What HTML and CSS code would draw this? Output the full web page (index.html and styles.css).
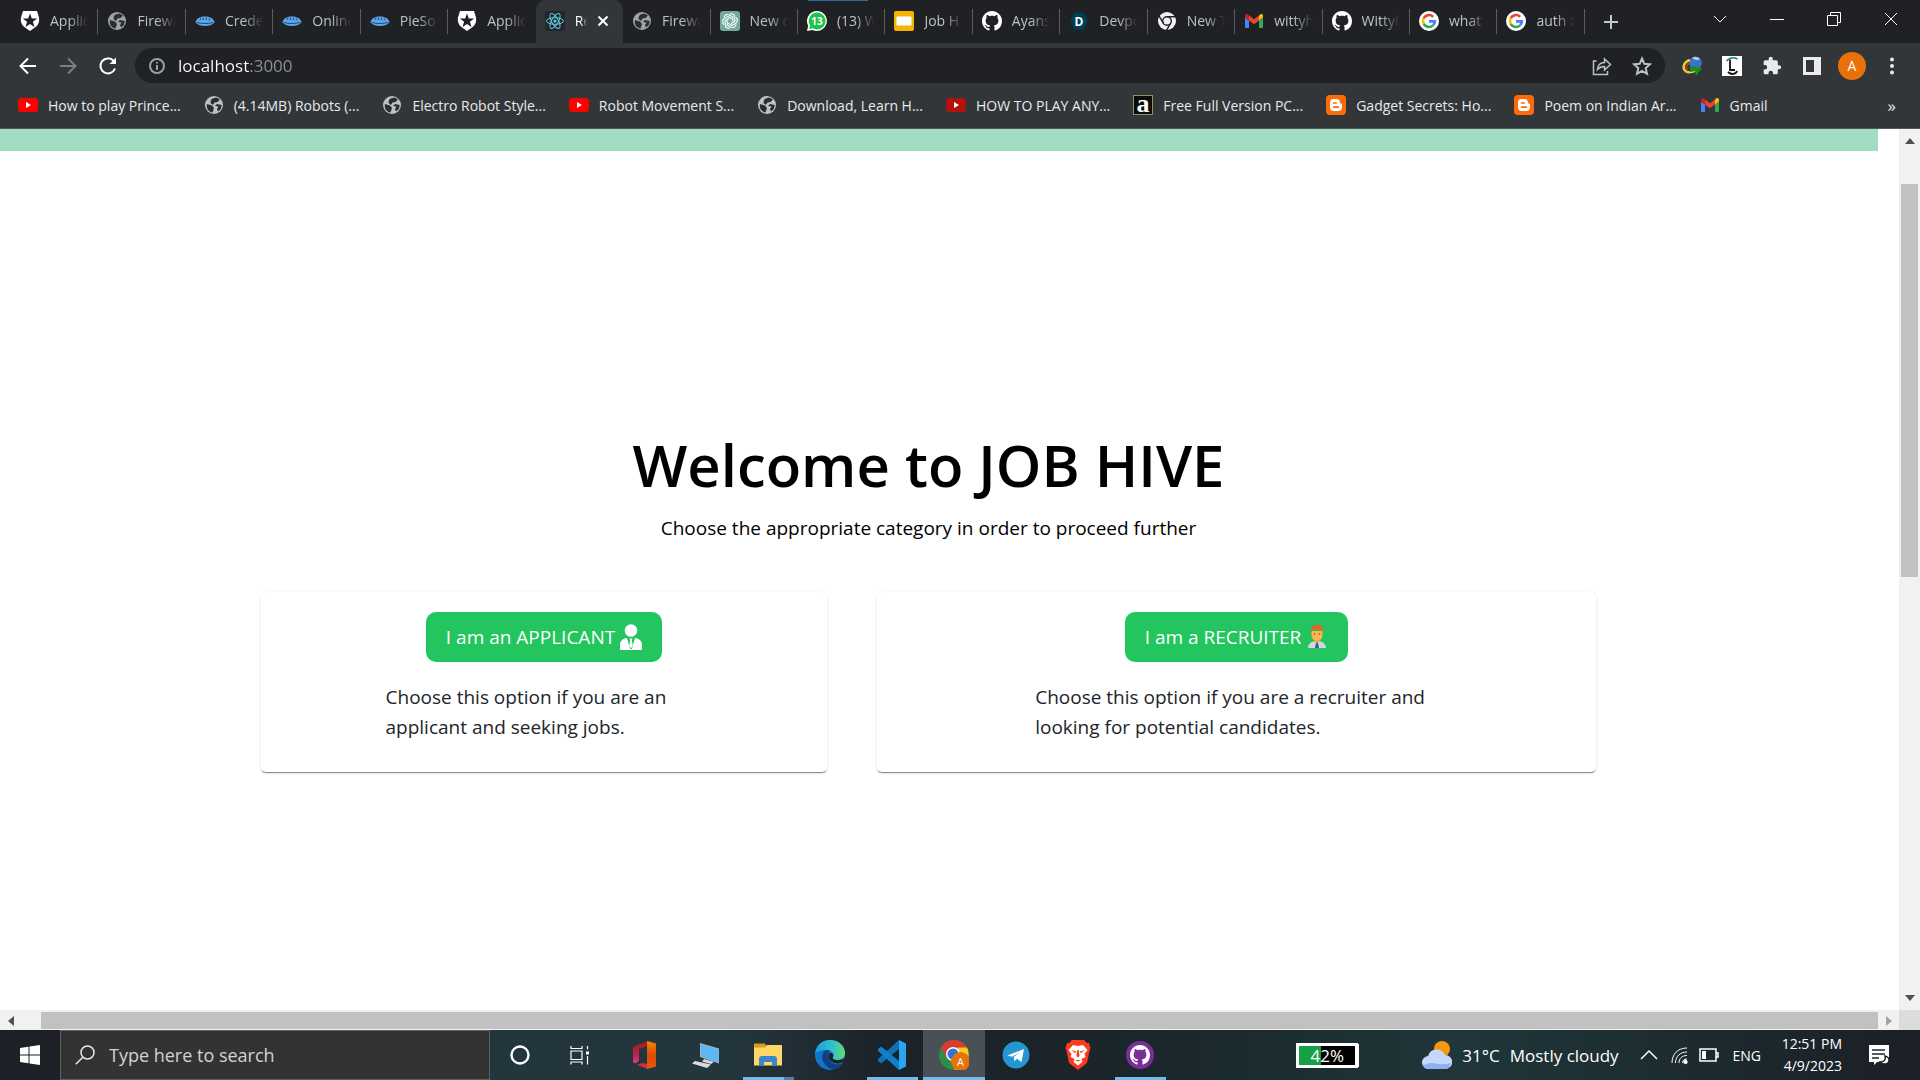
FILE: index.html
```html
<!DOCTYPE html>
<html lang="en">
<head>
    <meta charset="UTF-8">
    <meta name="viewport" content="width=device-width, initial-scale=1">
    <title>Job Hive</title>
    <link rel="stylesheet" href="styles.css">
</head>
<body>
    <!-- Shared icons -->
    <svg class="sprite" aria-hidden="true">
        <symbol id="auth0" viewBox="0 0 20 20">
            <path fill="#fff" d="M3 0h14l2 6.500c.8 4-.6 7-3 9.200L10 20l-6-4.300C1.600 13.500.2 10.500 1 6.500z"/>
            <path fill="#202124" d="M10 2.500l1.800 5h5.400l-4.300 3.300 1.600 5.200L10 12.900 5.500 16l1.600-5.200L2.800 7.500h5.400z"/>
        </symbol>
        <symbol id="globe" viewBox="0 0 20 20">
            <circle cx="10" cy="10" r="9" fill="currentColor"/>
            <path fill="#2b2d30" d="M3 9l5 1.500 2 2.500-1.500 4.500C5 17 2.500 14 2.800 10.500zM8.500 3.500l4-1 3.500 2-2.500 2.500-3 .5L9 10 6.500 8l.5-3zM13 9l4.800 1-1 4-2.800 2.500-1-2.500 1.500-2.500L11 11z"/>
        </symbol>
        <symbol id="pie" viewBox="0 0 20 20">
            <path fill="#5fa4e8" d="M1 10c1-3 4.500-4.500 9-4.500S18 7 19 10c1 1 .4 2.200-.6 2.200C17 14 14 15 10 15s-7-1-8.400-2.800C.6 12.200 0 11 1 10z"/>
            <path fill="none" stroke="#174a80" d="M2 11.500c4 1.300 12 1.300 16 0M5 9l1-2M8 9l.6-2.500M11 9l.6-2.500M14 9.500l.6-2"/>
        </symbol>
        <symbol id="react" viewBox="0 0 20 20">
            <rect width="20" height="20" rx="2" fill="#20272b"/>
            <g fill="none" stroke="#61c9e0">
                <ellipse cx="10" cy="10" rx="8.500" ry="3.300"/>
                <ellipse cx="10" cy="10" rx="8.500" ry="3.300" transform="rotate(60 10 10)"/>
                <ellipse cx="10" cy="10" rx="8.500" ry="3.300" transform="rotate(120 10 10)"/>
            </g>
            <circle cx="10" cy="10" r="1.600" fill="#61c9e0"/>
        </symbol>
        <symbol id="gpt" viewBox="0 0 20 20">
            <rect width="20" height="20" rx="3" fill="#74aa9c"/>
            <g fill="none" stroke="#fff" stroke-width="1.100">
                <path id="petal" d="M10 3c2.600-.8 5 1 4.800 3.500v4L11 12.600"/>
                <use href="#petal" transform="rotate(60 10 10)"/>
                <use href="#petal" transform="rotate(120 10 10)"/>
                <use href="#petal" transform="rotate(180 10 10)"/>
                <use href="#petal" transform="rotate(240 10 10)"/>
                <use href="#petal" transform="rotate(300 10 10)"/>
            </g>
        </symbol>
        <symbol id="slides" viewBox="0 0 20 20">
            <rect width="20" height="20" rx="2" fill="#f4b400"/>
            <rect x="2.500" y="5.500" width="15" height="9" fill="#fff"/>
        </symbol>
        <symbol id="github" viewBox="0 0 16 16">
            <path fill="#fff" d="M8 0C3.580 0 0 3.580 0 8c0 3.540 2.290 6.530 5.470 7.590.4.070.55-.17.55-.38 0-.19-.01-.82-.01-1.490-2.010.37-2.530-.49-2.690-.94-.09-.23-.48-.94-.82-1.130-.28-.15-.68-.52-.01-.53.63-.01 1.080.58 1.230.82.72 1.210 1.870.87 2.330.66.07-.52.28-.87.51-1.070-1.780-.2-3.640-.89-3.640-3.950 0-.87.31-1.590.82-2.150-.08-.2-.36-1.020.08-2.120 0 0 .67-.21 2.200.82.64-.18 1.320-.27 2-.27s1.360.09 2 .27c1.530-1.040 2.200-.82 2.200-.82.44 1.100.16 1.920.08 2.120.51.56.82 1.270.82 2.150 0 3.070-1.870 3.750-3.650 3.950.29.25.54.73.54 1.480 0 1.070-.01 1.930-.01 2.200 0 .21.15.46.55.38A8.010 8.010 0 0016 8c0-4.420-3.580-8-8-8z"/>
        </symbol>
        <symbol id="chromium" viewBox="0 0 20 20">
            <circle cx="10" cy="10" r="9" fill="#f1f3f4"/>
            <g fill="none" stroke="#202124" stroke-width="1.400">
                <circle cx="10" cy="10" r="4.300"/>
                <path d="M10 5.700h8.500M6.300 12.200L2 4.800M13.700 12.200L9.500 19.300"/>
            </g>
            <circle cx="10" cy="10" r="2.600" fill="#f1f3f4"/>
        </symbol>
        <symbol id="gmail" viewBox="0 0 20 20">
            <path fill="#4285f4" d="M1 6.500l4 3V17H2a1 1 0 01-1-1z"/>
            <path fill="#34a853" d="M19 6.500l-4 3V17h3a1 1 0 001-1z"/>
            <path fill="#ea4335" d="M5 4.500l5 3.800 5-3.800v5L10 13.300 5 9.500z"/>
            <path fill="#c5221f" d="M1 5c0-2 2-2.500 3.300-1.200L5 4.500v5L1 6.500z"/>
            <path fill="#fbbc04" d="M19 5c0-2-2-2.500-3.300-1.200l-.7.7v5l4-3z"/>
        </symbol>
        <symbol id="google" viewBox="0 0 20 20">
            <circle cx="10" cy="10" r="10" fill="#fff"/>
            <g fill="none" stroke-width="2.600">
                <path stroke="#ea4335" d="M14.200 5.800A6 6 0 004.700 7.200"/>
                <path stroke="#fbbc05" d="M4.700 7.200a6 6 0 000 5.600"/>
                <path stroke="#34a853" d="M4.700 12.800a6 6 0 009.300 1.600"/>
                <path stroke="#4285f4" d="M14 14.400a6 6 0 001.900-4H10"/>
            </g>
        </symbol>
        <symbol id="youtube" viewBox="0 0 20 20">
            <rect y="3" width="20" height="14" rx="3.500" fill="currentColor"/>
            <path fill="#fff" d="M8 7l5 3-5 3z"/>
        </symbol>
        <symbol id="blogger" viewBox="0 0 20 20">
            <rect width="20" height="20" rx="4" fill="#ff6a0a"/>
            <path fill="#fff" fill-rule="evenodd" d="M7 4h3.500C12.700 4 14 5.400 14 7.300c0 1 .4 1.400 1.200 1.500.6 0 .8.400.8 1V12.500c0 2-1.500 3.500-3.500 3.500H7.500C5.500 16 4 14.500 4 12.500v-5C4 5.500 5.300 4 7 4zM7.500 7.200a.8.800 0 000 1.600h2.700a.8.800 0 000-1.600zM7.500 11.300a.8.800 0 000 1.600h5a.8.800 0 000-1.600z"/>
        </symbol>
    </svg>

    <div class="screen">
        <!-- Tab strip -->
        <header class="tabstrip">
            <nav class="tabs">
                <div class="tab"><svg><use href="#auth0"/></svg><span>Applic</span></div>
                <div class="tab gray"><svg><use href="#globe"/></svg><span>Firewa</span></div>
                <div class="tab"><svg><use href="#pie"/></svg><span>Crede</span></div>
                <div class="tab"><svg><use href="#pie"/></svg><span>Online</span></div>
                <div class="tab"><svg><use href="#pie"/></svg><span>PieSo</span></div>
                <div class="tab last"><svg><use href="#auth0"/></svg><span>Applic</span></div>
                <div class="tab active"><svg><use href="#react"/></svg><span>Re</span><button class="close" aria-label="Close tab"><svg viewBox="0 0 12 12"><path d="M1.500 1.500l9 9M10.500 1.500l-9 9"/></svg></button></div>
                <div class="tab gray"><svg><use href="#globe"/></svg><span>Firewa</span></div>
                <div class="tab"><svg><use href="#gpt"/></svg><span>New c</span></div>
                <div class="tab loading"><svg viewBox="0 0 20 20"><path fill="#fff" d="M10 0a10 10 0 11-4.500 19L0 20l1.200-5.200A10 10 0 0110 0z"/><path fill="#1fc24a" d="M10 1.600a8.400 8.400 0 11-4 15.700L2.200 18l.8-3.600A8.400 8.400 0 0110 1.600z"/><text x="10" y="14" text-anchor="middle" font-size="10" font-weight="700" fill="#fff">13</text></svg><span>(13) W</span></div>
                <div class="tab"><svg><use href="#slides"/></svg><span>Job H</span></div>
                <div class="tab"><svg><use href="#github"/></svg><span>Ayans</span></div>
                <div class="tab"><svg viewBox="0 0 20 20"><path fill="#003e54" d="M5.500 1.500h9L19 10l-4.500 8.500h-9L1 10z"/><text x="10" y="14.500" text-anchor="middle" font-size="12" font-weight="700" fill="#fff">D</text></svg><span>Devpo</span></div>
                <div class="tab"><svg><use href="#chromium"/></svg><span>New T</span></div>
                <div class="tab"><svg><use href="#gmail"/></svg><span>wittyh</span></div>
                <div class="tab"><svg><use href="#github"/></svg><span>Wittyl</span></div>
                <div class="tab"><svg><use href="#google"/></svg><span>what</span></div>
                <div class="tab"><svg><use href="#google"/></svg><span>auth z</span></div>
            </nav>
            <button class="new-tab" aria-label="New tab"><svg viewBox="0 0 16 16"><path d="M8 1v14M1 8h14"/></svg></button>
            <div class="window-controls">
                <button aria-label="Search tabs"><svg viewBox="0 0 14 14"><path d="M1 4l6 6 6-6"/></svg></button>
                <button aria-label="Minimize"><svg viewBox="0 0 14 14"><path d="M0 7.500h14"/></svg></button>
                <button aria-label="Restore"><svg viewBox="0 0 14 14"><path d="M.5 3.500h10v10H.5zM3.500 3V.5h10v10H11"/></svg></button>
                <button aria-label="Close"><svg viewBox="0 0 14 14"><path d="M1 1l12 12M13 1L1 13"/></svg></button>
            </div>
        </header>

        <!-- Toolbar -->
        <div class="toolbar">
            <div class="nav-buttons">
                <button aria-label="Back"><svg viewBox="0 0 20 20"><path d="M18 10H3M10 2.500L2.500 10l7.500 7.500"/></svg></button>
                <button class="dim" aria-label="Forward"><svg viewBox="0 0 20 20"><path d="M2 10h15M10 2.500l7.500 7.500-7.500 7.500"/></svg></button>
                <button aria-label="Reload"><svg viewBox="0 0 20 20"><path d="M17 12.500A7.500 7.500 0 1115.500 4.800L17 6.500"/><path class="solid" d="M18 1.500V8h-6.500z"/></svg></button>
            </div>
            <div class="omnibox">
                <svg class="info" viewBox="0 0 16 16"><circle cx="8" cy="8" r="7"/><path d="M8 7v5M8 4v1.500"/></svg>
                <input class="address" type="text" value="localhost:3000" aria-label="Address">
                <button class="share" aria-label="Share"><svg viewBox="0 0 20 20"><path d="M4.500 5H1.500v13.500h14V15M5.500 13.500c.5-5 3-7 7-7V3L18.500 8.500 12.500 14v-3.500c-3 0-5 .8-7 3z"/></svg></button>
                <button aria-label="Bookmark this tab"><svg viewBox="0 0 20 20"><path d="M10 2.500l2.300 5.300 5.700.5-4.300 3.800 1.300 5.700-5-3-5 3 1.300-5.700L2 8.300l5.700-.5z"/></svg></button>
            </div>
            <div class="extensions">
                <button aria-label="Download manager"><svg viewBox="0 0 20 20"><circle cx="13.500" cy="7" r="6.300" fill="#3d72c4"/><path fill="#a9cdf5" d="M10 2c3-2.500 7-1 8 1-2 2-5 1-8-1z"/><path fill="none" stroke="#e9cf3c" stroke-width="2.500" d="M8 4C1 6 0 13 4 15.500c3 1.500 7 .5 9-1"/><path fill="none" stroke="#b83a2a" stroke-width="1.500" d="M8 7c-4 1.500-5 5-2 6.500"/><path fill="#1c8c1c" d="M8 10l12 2-6 8-1-5-5 1z"/></svg></button>
                <button aria-label="Reader extension"><svg viewBox="0 0 20 20"><path fill="#fff" d="M0 0h20v20H0z"/><path fill="none" stroke="#111" stroke-width="1.800" d="M8 3.500v10.500h5M6 16c3 3 8 2.500 9-1"/><path fill="none" stroke="#1f7d80" stroke-width="1.500" d="M4.500 5c3-3.500 7-4 11-2"/></svg></button>
                <button aria-label="Extensions"><svg viewBox="0 0 24 24"><path fill="#e8eaed" d="M20.500 11H19V7a2 2 0 00-2-2h-4V3.500a2.500 2.500 0 00-5 0V5H4a2 2 0 00-2 2v3.800h1.500a2.700 2.700 0 010 5.400H2V20c0 1.100.9 2 2 2h3.800v-1.500a2.700 2.700 0 015.400 0V22H17a2 2 0 002-2v-4h1.500a2.500 2.500 0 000-5z"/></svg></button>
                <button aria-label="Side panel"><svg viewBox="0 0 20 20"><path fill="#eceaf0" fill-rule="evenodd" d="M1 1h18v18H1zM4 4v12h8V4z"/></svg></button>
                <button class="avatar" aria-label="Profile">A</button>
                <button aria-label="Menu"><svg viewBox="0 0 20 20"><g fill="#e8eaed"><circle cx="10" cy="3.500" r="2"/><circle cx="10" cy="10" r="2"/><circle cx="10" cy="16.500" r="2"/></g></svg></button>
            </div>
        </div>

        <!-- Bookmarks -->
        <nav class="bookmarks">
            <a href="#" class="red"><svg><use href="#youtube"/></svg>How to play Prince...</a>
            <a href="#" class="gray"><svg><use href="#globe"/></svg>(4.14MB) Robots (...</a>
            <a href="#" class="gray"><svg><use href="#globe"/></svg>Electro Robot Style...</a>
            <a href="#" class="red"><svg><use href="#youtube"/></svg>Robot Movement S...</a>
            <a href="#" class="gray"><svg><use href="#globe"/></svg>Download, Learn H...</a>
            <a href="#" class="dark-red"><svg><use href="#youtube"/></svg>HOW TO PLAY ANY...</a>
            <a href="#"><svg viewBox="0 0 20 20"><rect x=".5" y=".5" width="19" height="19" fill="#0b0b08" stroke="#8c9468"/><text class="serif" x="10" y="17" text-anchor="middle" font-size="26" font-weight="700" fill="#fff">a</text></svg>Free Full Version PC...</a>
            <a href="#"><svg><use href="#blogger"/></svg>Gadget Secrets: Ho...</a>
            <a href="#"><svg><use href="#blogger"/></svg>Poem on Indian Ar...</a>
            <a href="#"><svg><use href="#gmail"/></svg>Gmail</a>
            <button class="more" aria-label="More bookmarks">»</button>
        </nav>

        <!-- Page -->
        <div class="viewport">
            <main class="page">
                <div class="banner"></div>
                <section class="welcome">
                    <h1>Welcome to JOB HIVE</h1>
                    <p class="lead">Choose the appropriate category in order to proceed further</p>
                    <div class="cards">
                        <article class="card">
                            <button class="choice">I am an APPLICANT
                                <svg viewBox="0 0 22 26"><circle cx="11" cy="6.500" r="6.300" fill="#fff"/><path fill="#fff" d="M0 25v-4.500C0 17 3 14.500 7 14l4 10 4-10c4 .5 7 3 7 6.500V25a1 1 0 01-1 1H1a1 1 0 01-1-1z"/><path fill="#22c55e" d="M7 13.500h8L11.800 25h-1.600z"/><path fill="#fff" d="M9.500 14.500h3l-.7 2 1 5L11 24.500 9.200 21.500l1-5z"/></svg>
                            </button>
                            <p>Choose this option if you are an applicant and seeking jobs.</p>
                        </article>
                        <article class="card">
                            <button class="choice">I am a RECRUITER
                                <svg viewBox="0 0 22 26"><path fill="#ff9800" d="M9 15h4v5H9z"/><path fill="#ffb74d" d="M5.500 7h11v4c0 3.500-2.500 6-5.500 6s-5.500-2.500-5.500-6z"/><path fill="#ff5722" d="M5 9C4 4 7 1 12 1c4 0 6 3 5 8l-1-3-6-1-4 2z"/><path fill="#cfd8dc" d="M2 24c0-4 3-6 6.500-7L11 20l2.500-3c3.500 1 6.500 3 6.500 7z"/><path fill="#3f51b5" d="M10 19h2l1 5H9z"/><circle cx="8.500" cy="10" r=".8" fill="#784719"/><circle cx="13.500" cy="10" r=".8" fill="#784719"/></svg>
                            </button>
                            <p>Choose this option if you are a recruiter and looking for potential candidates.</p>
                        </article>
                    </div>
                </section>
            </main>
            <div class="scrollbar vertical">
                <button aria-label="Scroll up"><svg viewBox="0 0 10 6"><path d="M5 0l5 6H0z"/></svg></button>
                <div class="track"><div class="thumb"></div></div>
                <button aria-label="Scroll down"><svg viewBox="0 0 10 6"><path d="M0 0h10L5 6z"/></svg></button>
            </div>
            <div class="scrollbar horizontal">
                <button aria-label="Scroll left"><svg viewBox="0 0 6 10"><path d="M6 0v10L0 5z"/></svg></button>
                <div class="track"><div class="thumb"></div></div>
                <button class="end" aria-label="Scroll right"><svg viewBox="0 0 6 10"><path d="M0 0l6 5-6 5z"/></svg></button>
            </div>
            <div class="corner"></div>
        </div>

        <!-- Taskbar -->
        <footer class="taskbar">
            <button class="start" aria-label="Start"><svg viewBox="0 0 20 20"><path fill="#fff" d="M0 3l8.500-1.200v7.700H0zM9.500 1.600L20 0v9.500H9.500zM0 10.500h8.500v7.700L0 17zM9.500 10.500H20V20L9.500 18.400z"/></svg></button>
            <label class="search">
                <svg viewBox="0 0 20 20"><circle cx="12.500" cy="7.500" r="6.500"/><path d="M8 12L.8 19.200"/></svg>
                <input type="text" placeholder="Type here to search" aria-label="Search">
            </label>
            <div class="system-buttons">
                <button aria-label="Cortana"><svg viewBox="0 0 20 20"><circle cx="10" cy="10" r="8.500" fill="none" stroke="#fff" stroke-width="2.400"/></svg></button>
                <button aria-label="Task view"><svg viewBox="0 0 20 20"><path fill="none" stroke="#fff" stroke-width="1.200" d="M1 1v2.500h11V1M1 6h11v8.500H1zM1 19.500V17h11v2.500M17.500 1v3.500M17.500 11v8.500"/><path fill="#fff" d="M16 6.500h3v3h-3z"/></svg></button>
            </div>
            <div class="apps">
                <button aria-label="Office"><svg viewBox="0 0 30 30"><defs><linearGradient id="office-left" x1="0" y1="0" x2="0" y2="1"><stop offset="0" stop-color="#a31b10"/><stop offset=".7" stop-color="#c2255c"/><stop offset="1" stop-color="#e0457b"/></linearGradient><linearGradient id="office-right" x1="0" y1="0" x2="0" y2="1"><stop offset="0" stop-color="#f08a00"/><stop offset=".5" stop-color="#dd4a08"/><stop offset="1" stop-color="#e25a12"/></linearGradient></defs><path fill="url(#office-left)" d="M4 7L18 1v5L10 9v12l-4 2.500-2-1.500z"/><path fill="#d62a3c" d="M8 25l5-2 6 1v5z"/><path fill="url(#office-right)" d="M18 1l9 2.500v23L18 29z"/></svg></button>
                <button aria-label="This PC"><svg viewBox="0 0 30 30"><path fill="#9fb6c4" d="M9 3l19 5.500v15L9 17z"/><path fill="#5cb8f5" d="M10 4.300l17.500 5.200v12.700L10 16.300z"/><path fill="#d8dde0" d="M13 19l10 3-3 2-9-2.500zM4 21l16 3.500-4 3.500L1 23.500z"/></svg></button>
                <button class="running multi" aria-label="File Explorer"><svg viewBox="0 0 30 30"><path fill="#d89b1a" d="M1 3.500h11l2 3-2 2H1z"/><path fill="#ffd767" d="M1 7.500h11l2-2.500h15v20.500H1z"/><path fill="#3987c9" d="M6 26v-7a3 3 0 013-3h12a3 3 0 013 3v7h-5v-4h-8v4z"/></svg></button>
                <button aria-label="Edge"><svg viewBox="0 0 30 30"><defs><linearGradient id="edge-top"><stop offset="0" stop-color="#1b9de2"/><stop offset=".6" stop-color="#35c1c8"/><stop offset="1" stop-color="#5fe06b"/></linearGradient></defs><circle cx="15" cy="15" r="15" fill="#1276c8"/><path fill="url(#edge-top)" d="M0 14C1 5 7 0 15 0c9 0 15 6 15 13 0 5-4 7-8 7-3 0-5-1-4-3 2-4-2-7-7-7S2 11 0 14z"/><path fill="#123f83" d="M11 10c-3 2-5 6-3 11s7 9 12 8c3-1 6-3 8-6-3 2-9 2-12-1s-4-8-1-11c-1-1-3-1-4-1z"/><path fill="#1c2329" d="M15 13c3 0 4 2 3 4s1 3 5 3 6-1 7-3l-1 5c-4 2-10 2-13-1s-3-6-1-8z"/></svg></button>
                <button class="running" aria-label="Visual Studio Code"><svg viewBox="0 0 30 30"><path fill="#1070b3" d="M22 0v9L4 23.500 1 21v-2z"/><path fill="#0f80cc" d="M1 9l3-2.500L22 21v9L1 11z"/><path fill="#2ba3ee" d="M22 0l7 3.500v23L22 30z"/></svg></button>
                <button class="running active" aria-label="Chrome"><svg viewBox="0 0 30 30"><circle cx="15" cy="15" r="15" fill="#2d8f47"/><path fill="#dd3b30" d="M2 7.500C8-2.500 22-2.500 28 7.500H15L8.500 19z"/><path fill="#fdc921" d="M28 7.500C33 18 26 30 15 30l6.500-11.500L18 7.500z"/><circle cx="14" cy="14" r="7" fill="#fff"/><circle cx="14" cy="14" r="5.500" fill="#3072e0"/><circle cx="21.500" cy="21.500" r="9.500" fill="#e8710a"/><text x="21.500" y="26" text-anchor="middle" font-size="11" fill="#fff">A</text></svg></button>
                <button aria-label="Telegram"><svg viewBox="0 0 30 30"><circle cx="15" cy="15" r="13.500" fill="#2496d0"/><path fill="#fff" d="M6.500 15.500L23 9l-2.500 13-4.500-3.300-2.500 2.500-.8-4.200L19 12l-8 4.800z"/></svg></button>
                <button aria-label="Brave"><svg viewBox="0 0 30 30"><path fill="#fb3a1c" d="M9 0h12l3 3h2l1.500 5-1 3-2.500 12-9 7-9-7L3.500 11l-1-3L4 3h2z"/><path fill="#fff" d="M10 5l5 1 5-1 4.500 5-3 4 1 3-4 2 1 3-4.500 3.500L10.500 22l1-3-4-2 1-3-3-4z"/><path fill="#fb3a1c" d="M8.500 10l5 1.500-1.500 1.500zM21.500 10l-5 1.500 1.500 1.500zM14.300 10h1.400l.8 6-1.500 1.500-1.500-1.500zM12 20h6l-3 1.500z"/></svg></button>
                <button class="running" aria-label="GitHub Desktop"><svg viewBox="0 0 30 30"><circle cx="15" cy="15" r="14" fill="#7a2f96"/><svg x="5" y="5" width="20" height="20"><use href="#github"/></svg></svg></button>
            </div>
            <div class="tray">
                <div class="battery-meter">42%</div>
                <button class="weather"><svg viewBox="0 0 30 30"><circle cx="20" cy="9" r="8" fill="#f7960f"/><path fill="#c4d8fb" d="M7 29a6.500 6.500 0 01-1-13 9 9 0 0117-1 7 7 0 01.500 14z"/><path fill="#8fb1f0" d="M1 24c3 2 6-2 10-1s8 2 18 0c-1 4-3 6-6 6H7c-3 0-5-2-6-5z"/></svg>31°C<span>Mostly cloudy</span></button>
                <button aria-label="Show hidden icons"><svg viewBox="0 0 20 20"><path d="M2 14l8-8 8 8"/></svg></button>
                <button class="network" aria-label="Network"><svg viewBox="0 0 20 20"><path d="M3 18C3 9 9 3 18 3M6.500 18c0-6.500 4.500-11 11.500-11M10 18c0-4.500 3-7.500 8-7.500M13.500 18c0-2.500 1.500-4 4.500-4"/><circle cx="16.500" cy="17" r="1.700" fill="#fff"/></svg></button>
                <button aria-label="Battery"><svg viewBox="0 0 20 20"><path d="M1 4h16v12H1zM17.500 8h1.500v4h-1.500"/><path fill="#fff" stroke="none" d="M3 6h4v8H3z"/></svg></button>
                <button class="lang">ENG</button>
                <button class="clock"><span>12:51 PM</span><span>4/9/2023</span></button>
                <button class="notify" aria-label="Notifications"><svg viewBox="0 0 20 20"><path fill="#fff" stroke="none" d="M0 0h20v17H8l-3 3v-3H0z"/><path stroke="#1f272c" d="M3 5h13M3 9h13M3 13h7"/><path fill="#fff" stroke="#1f272c" d="M16 11c1 4-1 6-5 6 2 3 9 3 9-2 0-2-2-3.500-4-4z"/></svg></button>
            </div>
        </footer>
    </div>
</body>
</html>
```
FILE: styles.css
```css
* {
    box-sizing: border-box;
}

body {
    margin: 0;
    font-family: "Open Sans", "Noto Sans", sans-serif;
    color: #000;
    overflow: hidden;
}

button,
input {
    font: inherit;
    color: inherit;
    border: 0;
    padding: 0;
    margin: 0;
    background: none;
}

button {
    display: flex;
    align-items: center;
    justify-content: center;
    cursor: pointer;
}

svg {
    display: block;
    flex: none;
    width: 20px;
    height: 20px;
}

.sprite {
    position: absolute;
    width: 0;
    height: 0;
}

.serif {
    font-family: "Liberation Serif", serif;
}

.screen {
    height: 100vh;
    display: flex;
    flex-direction: column;
}

/* Tab strip */
.tabstrip {
    height: 43px;
    flex: none;
    display: flex;
    background: #202124;
    color: #bdc1c6;
    font-size: 14px;
}

.tabs {
    flex: 1;
    display: flex;
    padding-left: 11px;
    min-width: 0;
}

.tab {
    flex: 1 1 0;
    min-width: 0;
    display: flex;
    align-items: center;
    gap: 10px;
    padding: 0 10px 2px 9px;
    background: linear-gradient(#5a5c60, #5a5c60) right center / 1px 25px no-repeat;
}

.tab span {
    flex: 1;
    overflow: hidden;
    white-space: nowrap;
    -webkit-mask-image: linear-gradient(to right, #000 50%, transparent);
    mask-image: linear-gradient(to right, #000 50%, transparent);
}

.tab.gray svg {
    color: #9fa2a6;
}

.bookmarks .gray svg {
    color: #bdc1c6;
}

.tab.last {
    background: none;
}

.tab.active {
    background: #323639;
    border-radius: 10px 10px 0 0;
    color: #fff;
}

.tab.loading {
    background:
        linear-gradient(#5a5c60, #5a5c60) right center / 1px 25px no-repeat,
        linear-gradient(#2a6ca0, #2a6ca0) 10px 0 / 60px 1px no-repeat;
}

.close {
    margin-right: 4px;
}

.close svg {
    width: 12px;
    height: 12px;
    fill: none;
    stroke: #fff;
    stroke-width: 2;
}

.new-tab {
    width: 52px;
}

.new-tab svg {
    width: 16px;
    height: 16px;
    stroke: #c4c7cb;
    stroke-width: 2;
}

.window-controls {
    display: flex;
    height: 38px;
    margin-left: 54px;
    padding-right: 1px;
}

.window-controls button {
    width: 57px;
}

.window-controls svg {
    width: 14px;
    height: 14px;
    fill: none;
    stroke: #fff;
}

/* Toolbar */
.toolbar {
    height: 45px;
    flex: none;
    display: flex;
    align-items: center;
    background: #323639;
    padding-right: 8px;
}

.nav-buttons {
    display: flex;
    padding: 0 7px 0 8px;
}

.nav-buttons button {
    width: 40px;
    height: 36px;
}

.nav-buttons svg {
    fill: none;
    stroke: #fff;
    stroke-width: 2;
}

.nav-buttons .solid {
    fill: #fff;
    stroke: none;
}

.nav-buttons .dim svg {
    stroke: #7d7f83;
}

.omnibox {
    flex: 1;
    height: 35px;
    display: flex;
    align-items: center;
    gap: 10px;
    padding: 0 8px 0 14px;
    border-radius: 18px;
    background: #202124;
}

.omnibox svg {
    fill: none;
    stroke: #bdc1c6;
    stroke-width: 2;
}

.omnibox .share svg {
    stroke-width: 1.5;
}

.omnibox .info {
    width: 16px;
    height: 16px;
    stroke: #9aa0a6;
}

.omnibox button {
    width: 30px;
}

/* Host in white, port in grey */
.address {
    flex: 1;
    min-width: 0;
    font-size: 17px;
    margin-left: 3px;
    outline: none;
    color: transparent;
    background: linear-gradient(to right, #fff 72px, #8f9297 72px);
    -webkit-background-clip: text;
    background-clip: text;
}

.extensions {
    display: flex;
    align-items: center;
    padding-left: 7px;
}

.extensions button {
    width: 40px;
}

.extensions .avatar {
    width: 28px;
    height: 28px;
    margin: 0 6px;
    border-radius: 50%;
    background: #e8710a;
    color: #fff;
    font-size: 14px;
}

/* Bookmarks */
.bookmarks {
    height: 41px;
    flex: none;
    display: flex;
    align-items: center;
    gap: 23px;
    padding: 0 24px 6px 18px;
    background: #323639;
    border-bottom: 1px solid #55585a;
    color: #e8eaed;
    font-size: 14px;
}

.bookmarks a {
    display: flex;
    align-items: center;
    gap: 10px;
    color: inherit;
    text-decoration: none;
    white-space: nowrap;
}

.bookmarks .red svg {
    color: #f00;
}

.bookmarks .dark-red svg {
    color: #b5120f;
}

.bookmarks .more {
    margin-left: auto;
    font-size: 17px;
}

/* Page */
.viewport {
    flex: 1;
    min-height: 0;
    display: grid;
    grid-template-columns: 1fr 21px;
    grid-template-rows: 1fr 20px;
    background: #fff;
}

.page {
    overflow: hidden;
}

.banner {
    height: 22px;
    margin-right: 21px;
    background: #a0ddc3;
}

.welcome {
    padding: 269px 303px 0 261px;
    text-align: center;
}

.welcome h1 {
    margin: 0 0 3px;
    font-size: 58px;
    font-weight: 600;
    line-height: 90px;
}

.lead {
    margin: 0 0 49px;
    font-size: 19px;
    line-height: 30px;
}

.cards {
    display: grid;
    grid-template-columns: 566fr 719fr;
    gap: 50px;
}

.card {
    padding: 20px 0 30px;
    border-radius: 5px;
    box-shadow: 0 1px 3px rgba(0, 0, 0, 0.15), 0 2px 1px -1px rgba(0, 0, 0, 0.4);
    color: #212529;
    font-size: 19px;
    line-height: 30px;
}

.choice {
    height: 50px;
    margin: 0 auto 20px;
    padding: 0 20px;
    gap: 5px;
    border-radius: 10px;
    background: #22c55e;
    color: #fff;
}

.choice svg {
    width: 22px;
    height: 26px;
}

.card p {
    margin: 0 22%;
    text-align: left;
}

/* Scrollbars */
.scrollbar {
    display: flex;
    background: #f1f1f1;
}

.scrollbar button {
    flex: none;
    width: 21px;
    height: 21px;
}

.scrollbar svg {
    width: 10px;
    height: 6px;
    fill: #505050;
}

.scrollbar .track {
    flex: 1;
}

.scrollbar .thumb {
    background: #c1c1c1;
}

.vertical {
    flex-direction: column;
    padding: 1px 2px 2px;
}

.vertical button {
    width: 17px;
}

.vertical .track {
    padding-top: 33px;
}

.vertical .thumb {
    height: 49%;
}

.horizontal {
    padding: 2px 0 1px;
}

.horizontal button {
    height: 17px;
}

.horizontal svg {
    width: 6px;
    height: 10px;
}

.horizontal .track {
    padding-left: 20px;
}

.horizontal .thumb {
    height: 100%;
}

.horizontal .end svg {
    fill: #a3a3a3;
}

.corner {
    background: #dcdcdc;
}

/* Taskbar */
.taskbar {
    height: 50px;
    flex: none;
    display: flex;
    background: linear-gradient(to right, #1d2027, #24363d 26%, #24363d 38%, #1c2229 46%, #1b2429 56%, #1b2a2e 64%, #20363a 76%, #1c292e 90%, #1c1f26);
    color: #fff;
    font-size: 17px;
}

.start {
    width: 60px;
    background: #1d2027;
}

.search {
    width: 430px;
    display: flex;
    align-items: center;
    gap: 14px;
    padding-left: 14px;
    background: #333;
    border: 1px solid #5d5f60;
    font-size: 18px;
}

.search svg {
    fill: none;
    stroke: #e8e8e8;
    stroke-width: 1.5;
}

.search input {
    flex: 1;
    min-width: 0;
    outline: none;
}

.search input::placeholder {
    color: #d2d2d2;
    opacity: 1;
}

.system-buttons {
    display: flex;
}

.system-buttons button {
    width: 60px;
}

.apps {
    display: flex;
    margin-left: 3px;
}

.apps button {
    width: 62px;
}

.apps button > svg {
    width: 30px;
    height: 30px;
}

.running {
    background: linear-gradient(#76b9ed, #76b9ed) center bottom / 51px 3px no-repeat;
}

.running.multi {
    background:
        linear-gradient(to right, #76b9ed 80%, #5182a6 80%) center bottom / 51px 3px no-repeat;
}

.running.active {
    background: linear-gradient(#76b9ed, #76b9ed) center bottom / 100% 3px no-repeat, #4a5156;
}

.tray {
    display: flex;
    align-items: center;
    margin-left: auto;
    padding-right: 26px;
}

.tray svg {
    fill: none;
    stroke: #fff;
    stroke-width: 1.5;
}

.tray .network svg {
    stroke-width: 1;
}

.tray > button {
    height: 50px;
}

.battery-meter {
    width: 62px;
    height: 25px;
    margin-right: 64px;
    border: 3px solid #fff;
    background: linear-gradient(to right, #16a045 40%, #000 40%);
    box-shadow: 2px 0 0 -1px #fff;
    text-align: center;
    font-size: 17px;
    line-height: 19px;
}

.weather {
    gap: 10px;
    margin-right: 15px;
}

.tray .weather svg {
    width: 30px;
    height: 30px;
    stroke: none;
}

.tray > button:not(.weather) {
    min-width: 30px;
}

.lang {
    font-size: 14px;
    margin: 0 20px 0 8px;
}

.clock {
    flex-direction: column;
    align-items: flex-end;
    font-size: 14px;
    line-height: 22px;
}

.notify {
    margin-left: 22px;
}
```
